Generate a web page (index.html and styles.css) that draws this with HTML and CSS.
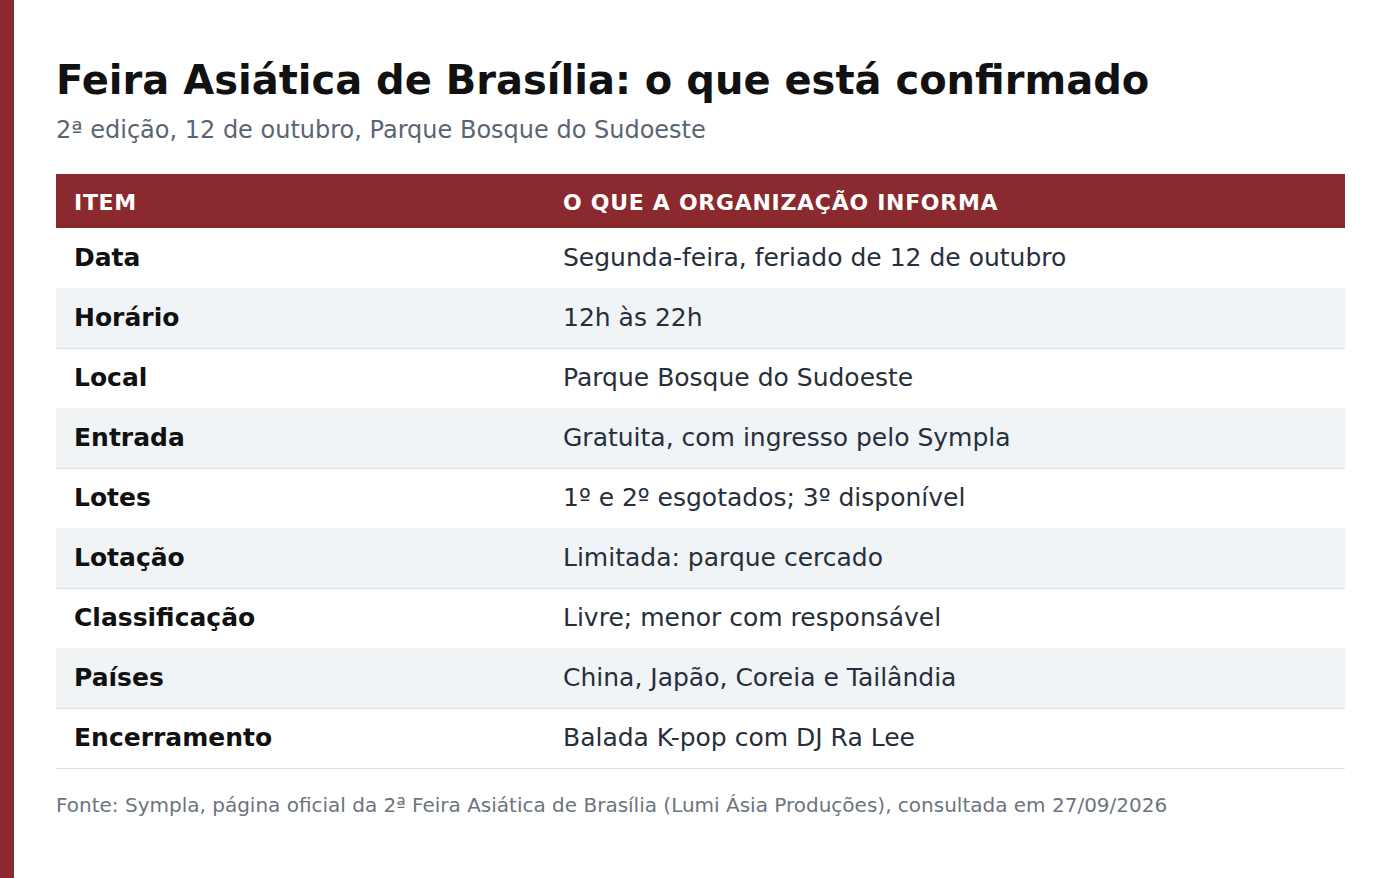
FILE: index.html
```html
<!DOCTYPE html>
<html lang="pt-BR">
<head>
<meta charset="utf-8">
<title>Feira Asiática de Brasília</title>
<link rel="stylesheet" href="styles.css">
</head>
<body>
<div class="page">
  <div class="stripe"></div>
  <main class="content">
    <h1 class="title">Feira Asiática de Brasília: o que está confirmado</h1>
    <p class="subtitle">2ª edição, 12 de outubro, Parque Bosque do Sudoeste</p>
    <table class="info">
      <thead>
        <tr><th class="col-item">Item</th><th>O que a organização informa</th></tr>
      </thead>
      <tbody>
        <tr><td class="key">Data</td><td>Segunda-feira, feriado de 12 de outubro</td></tr>
        <tr><td class="key">Horário</td><td>12h às 22h</td></tr>
        <tr><td class="key">Local</td><td>Parque Bosque do Sudoeste</td></tr>
        <tr><td class="key">Entrada</td><td>Gratuita, com ingresso pelo Sympla</td></tr>
        <tr><td class="key">Lotes</td><td>1º e 2º esgotados; 3º disponível</td></tr>
        <tr><td class="key">Lotação</td><td>Limitada: parque cercado</td></tr>
        <tr><td class="key">Classificação</td><td>Livre; menor com responsável</td></tr>
        <tr><td class="key">Países</td><td>China, Japão, Coreia e Tailândia</td></tr>
        <tr><td class="key">Encerramento</td><td>Balada K-pop com DJ Ra Lee</td></tr>
      </tbody>
    </table>
    <p class="source">Fonte: Sympla, página oficial da 2ª Feira Asiática de Brasília (Lumi Ásia Produções), consultada em 27/09/2026</p>
  </main>
</div>
</body>
</html>
```
FILE: styles.css
```css
html, body {
  margin: 0;
  padding: 0;
  background: #ffffff;
}
body {
  font-family: "DejaVu Sans", "Noto Sans", sans-serif;
}
.page {
  display: flex;
  min-height: 878px;
}
.stripe {
  width: 14px;
  flex: 0 0 14px;
  background: #8b2a2e;
}
.content {
  flex: 1;
  padding: 56px 55px 0 42px;
}
.title {
  margin: 0;
  font-size: 40px;
  line-height: 48px;
  font-weight: bold;
  color: #111111;
}
.subtitle {
  margin: 10px 0 0;
  font-size: 24px;
  line-height: 32px;
  color: #5a6573;
}
.info {
  width: 100%;
  margin-top: 28px;
  border-collapse: collapse;
}
.info th {
  background: #8b2a2e;
  color: #ffffff;
  text-align: left;
  text-transform: uppercase;
  font-size: 22px;
  font-weight: bold;
  letter-spacing: 0.7px;
  height: 54px;
  padding: 3px 18px 0;
  box-sizing: border-box;
}
.info th.col-item {
  width: 489px;
}
.info td {
  font-size: 25px;
  color: #262f3b;
  height: 60px;
  padding: 0 18px 1px;
  box-sizing: border-box;
  border-bottom: 1px solid transparent;
}
.info td.key {
  font-weight: bold;
  color: #111111;
}
.info tbody tr:nth-child(even) td {
  background: #f1f4f7;
  border-bottom: 1px solid #dbe1e8;
}
.info tbody tr:last-child td {
  border-bottom: 1px solid #dbe1e8;
}
.source {
  margin: 23px 0 0;
  font-size: 20px;
  line-height: 26px;
  color: #6b7480;
}
```
